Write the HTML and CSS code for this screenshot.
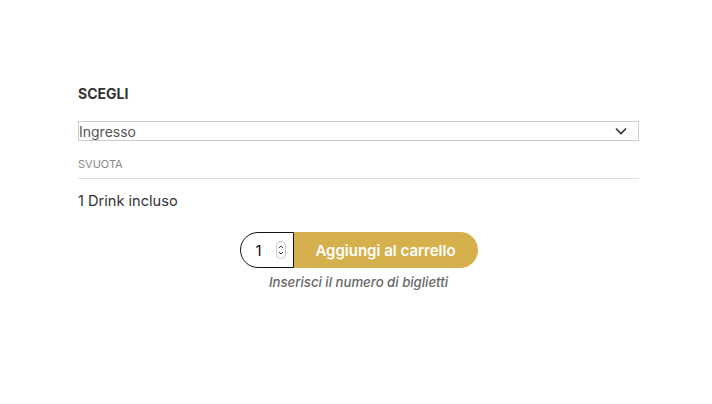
FILE: index.html
```html
<!DOCTYPE html>
<html lang="it">
<head>
    <meta charset="UTF-8">
    <meta name="viewport" content="width=device-width, initial-scale=1.0">
    <title>Biglietti</title>
    <link rel="stylesheet" href="styles.css">
</head>
<body>
    <div class="ticket">
        <label class="label" for="variante">SCEGLI</label>
        <div class="select-wrap">
            <select id="variante" class="select">
                <option>Ingresso</option>
            </select>
            <svg class="chevron" width="12" height="8" viewBox="0 0 12 8">
                <path d="M1 1.5 L6 6.5 L11 1.5" fill="none" stroke="#333" stroke-width="1.6"/>
            </svg>
        </div>
        <a class="reset" href="#">SVUOTA</a>
        <div class="desc">1 Drink incluso</div>
        <form class="cart">
            <div class="qty">
                <span class="qty-num">1</span>
                <span class="spinner">
                    <svg width="10" height="18" viewBox="0 0 10 18">
                        <rect x="0.5" y="0.5" width="9" height="17" rx="4" fill="none" stroke="#c8c8c8" stroke-width="1"/>
                        <path d="M3 7 L5 5 L7 7" fill="none" stroke="#333" stroke-width="1"/>
                        <path d="M3 11 L5 13 L7 11" fill="none" stroke="#333" stroke-width="1"/>
                    </svg>
                </span>
            </div>
            <button class="add" type="button">Aggiungi al carrello</button>
        </form>
        <p class="hint">Inserisci il numero di biglietti</p>
    </div>
</body>
</html>
```

FILE: styles.css
```css
body {
    margin: 0;
    font-family: Inter, "Liberation Sans", sans-serif;
    color: #333;
    background: #fff;
}
.ticket {
    width: 561px;
    padding-top: 85px;
    margin-left: 78px;
}
.label {
    display: block;
    font-size: 14px;
    font-weight: 700;
    color: #333;
    line-height: 17px;
    margin-bottom: 19px;
}
.select-wrap {
    position: relative;
}
.select {
    display: block;
    width: 100%;
    height: 20px;
    border: 1px solid #ccc;
    border-radius: 0;
    background: #fff;
    appearance: none;
    font-family: inherit;
    font-size: 14px;
    color: #555;
    padding: 0;
    margin: 0;
}
.chevron {
    position: absolute;
    right: 12px;
    top: 6px;
}
.reset {
    display: block;
    font-size: 11px;
    color: #888;
    text-decoration: none;
    padding: 17px 0 7px;
    line-height: 13px;
    border-bottom: 1px solid #ddd;
}
.desc {
    font-size: 14.6px;
    color: #333;
    margin-top: 13px;
    line-height: 18px;
}
.cart {
    display: flex;
    justify-content: center;
    margin-top: 22px;
}
.qty {
    display: flex;
    align-items: center;
    width: 54px;
    height: 36px;
    box-sizing: border-box;
    border: 1px solid #111;
    border-radius: 18px 0 0 18px;
    padding-left: 15px;
}
.qty-num {
    font-size: 15px;
    color: #111;
    width: 20px;
}
.spinner {
    display: flex;
}
.add {
    height: 36px;
    width: 184px;
    border: none;
    background: #d6b04c;
    color: #fff;
    font-family: inherit;
    font-size: 15px;
    font-weight: 600;
    border-radius: 0 18px 18px 0;
    padding: 0;
}
.hint {
    margin: 6px 0 0;
    text-align: center;
    font-size: 13.2px;
    font-style: italic;
    font-weight: 500;
    color: #666;
}
```
